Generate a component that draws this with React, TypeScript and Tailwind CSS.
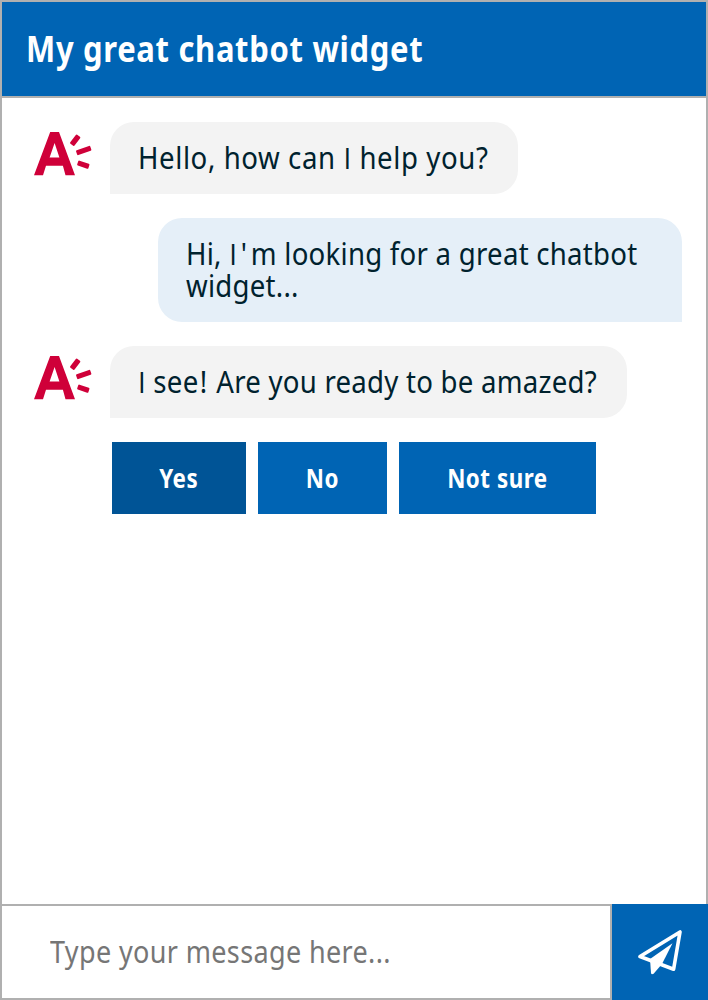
import type { ReactNode } from "react";

function BotLogo() {
  return (
    <svg viewBox="0 0 58 44" className="mt-[10px] mr-[18px] ml-2 h-11 w-[58px] shrink-0" fill="#cf0039">
      <path fillRule="evenodd" d="M16.2 0H25L41 43.2H31.5L28.9 33.7H12L9 43.2H0ZM20.6 11L15.6 25.4H25.4Z" />
      <rect x="-5.6" y="-2.7" width="11.2" height="5.4" rx="1" transform="translate(41.2 8.3) rotate(-53)" />
      <rect x="-7.5" y="-2.6" width="15" height="5.2" rx="1" transform="translate(49.7 18.5) rotate(-19)" />
      <rect x="-5.9" y="-2.6" width="11.8" height="5.2" rx="1" transform="translate(49.3 32.7) rotate(19)" />
    </svg>
  );
}

function SansI() {
  return <span className="font-['Open_Sans',sans-serif]">I</span>;
}

function BotMessage({ className, children }: { className: string; children: ReactNode }) {
  return (
    <div className="flex">
      <BotLogo />
      <div className={`h-[72px] rounded-3xl rounded-bl-none bg-[#f3f3f3] pt-5 pl-7 ${className}`}>{children}</div>
    </div>
  );
}

export default function App() {
  return (
    <div className="flex h-[1000px] w-[708px] flex-col overflow-hidden bg-white font-['Noto_Sans','Open_Sans',sans-serif] text-[30px] leading-8 text-[#00222e]">
      <header className="flex h-[98px] shrink-0 items-center border-2 border-[#b0b0b0] bg-[#0064b4] px-6">
        <h1 className="origin-left scale-x-[0.86] text-[36px] font-bold tracking-[0.8px] whitespace-nowrap text-white">
          My great chatbot widget
        </h1>
      </header>
      <main className="flex flex-1 flex-col gap-6 border-x-2 border-[#b0b0b0] px-6 pt-6">
        <BotMessage className="w-[408px]">
          <p className="origin-left scale-x-[0.92] tracking-[0.64px] whitespace-nowrap">
            Hello, how can <SansI /> help you?
          </p>
        </BotMessage>
        <div className="h-[104px] w-[524px] self-end rounded-3xl rounded-br-none bg-[#e5eff8] px-7 pt-5">
          <p className="origin-left scale-x-[0.92] tracking-[0.27px] whitespace-nowrap">
            Hi, <span className="tracking-[4.2px]"><SansI />'</span>m looking for a great chatbot
            <br />
            widget...
          </p>
        </div>
        <BotMessage className="w-[517px]">
          <p className="origin-left scale-x-[0.92] tracking-[0.26px] whitespace-nowrap">
            <SansI /> see<span className="ml-[1.5px] mr-[1.5px]">!</span> Are you ready to be amazed?
          </p>
        </BotMessage>
        <div className="ml-[86px] flex gap-3 text-[26px] font-bold tracking-[0.6px] text-white">
          <button className="h-[72px] w-[134px] bg-[#005496]">
            <span className="inline-block scale-x-[0.86]">Yes</span>
          </button>
          <button className="h-[72px] w-[129px] bg-[#0064b4]">
            <span className="inline-block scale-x-[0.86]">No</span>
          </button>
          <button className="h-[72px] w-[197px] bg-[#0064b4]">
            <span className="inline-block scale-x-[0.86]">Not sure</span>
          </button>
        </div>
      </main>
      <footer className="flex h-24 shrink-0">
        <div className="flex flex-1 items-center border-2 border-[#b0b0b0] pl-12 text-[#767676]">
          <span className="origin-left scale-x-[0.9] tracking-[0.4px] whitespace-nowrap">Type your message here...</span>
        </div>
        <button className="grid h-24 w-24 place-items-center bg-[#0064b4]">
          <svg viewBox="0 0 44 46" className="h-[46px] w-11" fill="none" stroke="white" strokeWidth="3.6" strokeLinejoin="round">
            <path d="M2 27.5L42 3L35.6 40.2L2 27.5Z" />
            <path d="M12 30L34.5 14.3L24 35L15.6 44.8Q13.4 46 13 44Z" fill="white" stroke="none" />
          </svg>
        </button>
      </footer>
    </div>
  );
}
